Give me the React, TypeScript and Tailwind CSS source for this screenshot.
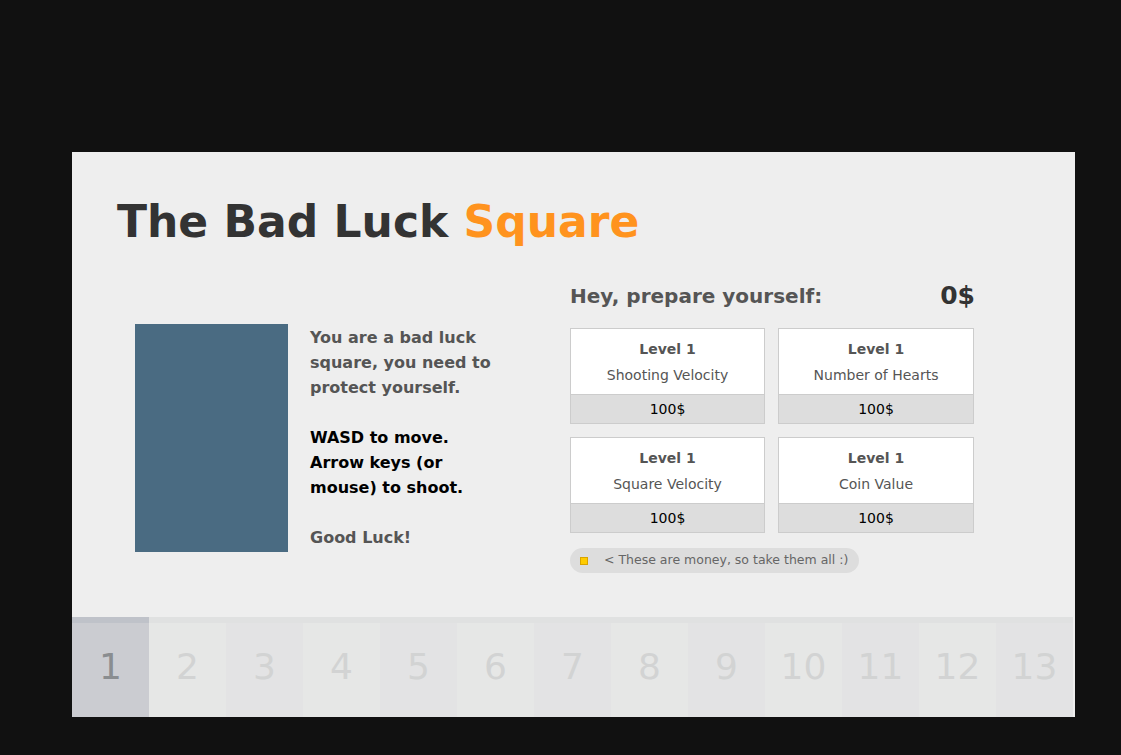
import React from "react";

const cards = [
  { name: "Shooting Velocity" },
  { name: "Number of Hearts" },
  { name: "Square Velocity" },
  { name: "Coin Value" },
];

export default function App() {
  const nums = Array.from({ length: 13 }, (_, i) => i + 1);
  return (
    <div
      className="min-h-screen bg-[#111111] pt-[152px] pl-[72px]"
      style={{ fontFamily: '"DejaVu Sans", sans-serif' }}
    >
      <div className="flex h-[565px] w-[1003px] flex-col bg-[#eeeeee]">
        <h1 className="mt-[43px] pl-[45px] text-[44px] font-bold leading-[54px] text-[#333333]">
          The Bad Luck <span className="text-[#ff931e]">Square</span>
        </h1>
        <div className="mt-[33px] flex">
          <div className="flex w-[498px] items-start pl-[63px] pt-[42px]">
            <div className="h-[228px] w-[153px] shrink-0 bg-[#4a6b82]" />
            <p className="ml-[22px] mt-[1px] w-[190px] text-[16px] font-bold leading-[25px] text-[#555555]">
              You are a bad luck square, you need to protect yourself.
              <br />
              <br />
              <span className="text-black">
                WASD to move. Arrow keys (or mouse) to shoot.
              </span>
              <br />
              <br />
              Good Luck!
            </p>
          </div>
          <div className="w-[405px]">
            <div className="flex h-[28px] items-center justify-between">
              <span className="text-[20px] font-bold text-[#555555]">
                Hey, prepare yourself:
              </span>
              <span className="text-[25px] font-bold text-[#333333]">0$</span>
            </div>
            <div className="mt-[18px] grid grid-cols-[195px_196px] gap-x-[13px] gap-y-[13px]">
              {cards.map((c) => (
                <div
                  key={c.name}
                  className="flex h-[96px] flex-col border border-[#cccccc] bg-white text-center text-[14px]"
                >
                  <div className="flex flex-1 flex-col pt-[10px]">
                    <div className="font-bold leading-[20px] text-[#555555]">Level 1</div>
                    <div className="mt-[6px] leading-[20px] text-[#555555]">{c.name}</div>
                  </div>
                  <div className="flex h-[29px] items-center justify-center border-t border-[#cccccc] bg-[#dddddd] text-black">
                    100$
                  </div>
                </div>
              ))}
            </div>
            <div className="mt-[15px] inline-flex h-[25px] items-center rounded-full bg-[#dddddd] pl-[10px] pr-[11px]">
              <span className="h-[8px] w-[8px] border border-[#d9a400] bg-[#ffcc00]" />
              <span className="ml-[16px] text-[12.5px] text-[#666666]">
                &lt; These are money, so take them all :)
              </span>
            </div>
          </div>
        </div>
        <div className="mt-auto flex h-[100px]">
          {nums.map((n, i) => {
            const active = n === 1;
            const body = active
              ? "bg-[#cbccd1] text-[#8a8d90]"
              : i % 2 === 1
              ? "bg-[#e6e7e6] text-[#d2d3d3]"
              : "bg-[#e3e3e4] text-[#d2d3d3]";
            return (
              <div key={n} className="flex w-[77px] flex-col">
                <div className={active ? "h-[6px] bg-[#bfc2c9]" : "h-[6px] bg-[#e0e1e1]"} />
                <div className={`flex flex-1 items-center justify-center pb-[6px] text-[36px] ${body}`}>
                  {n}
                </div>
              </div>
            );
          })}
        </div>
      </div>
    </div>
  );
}
